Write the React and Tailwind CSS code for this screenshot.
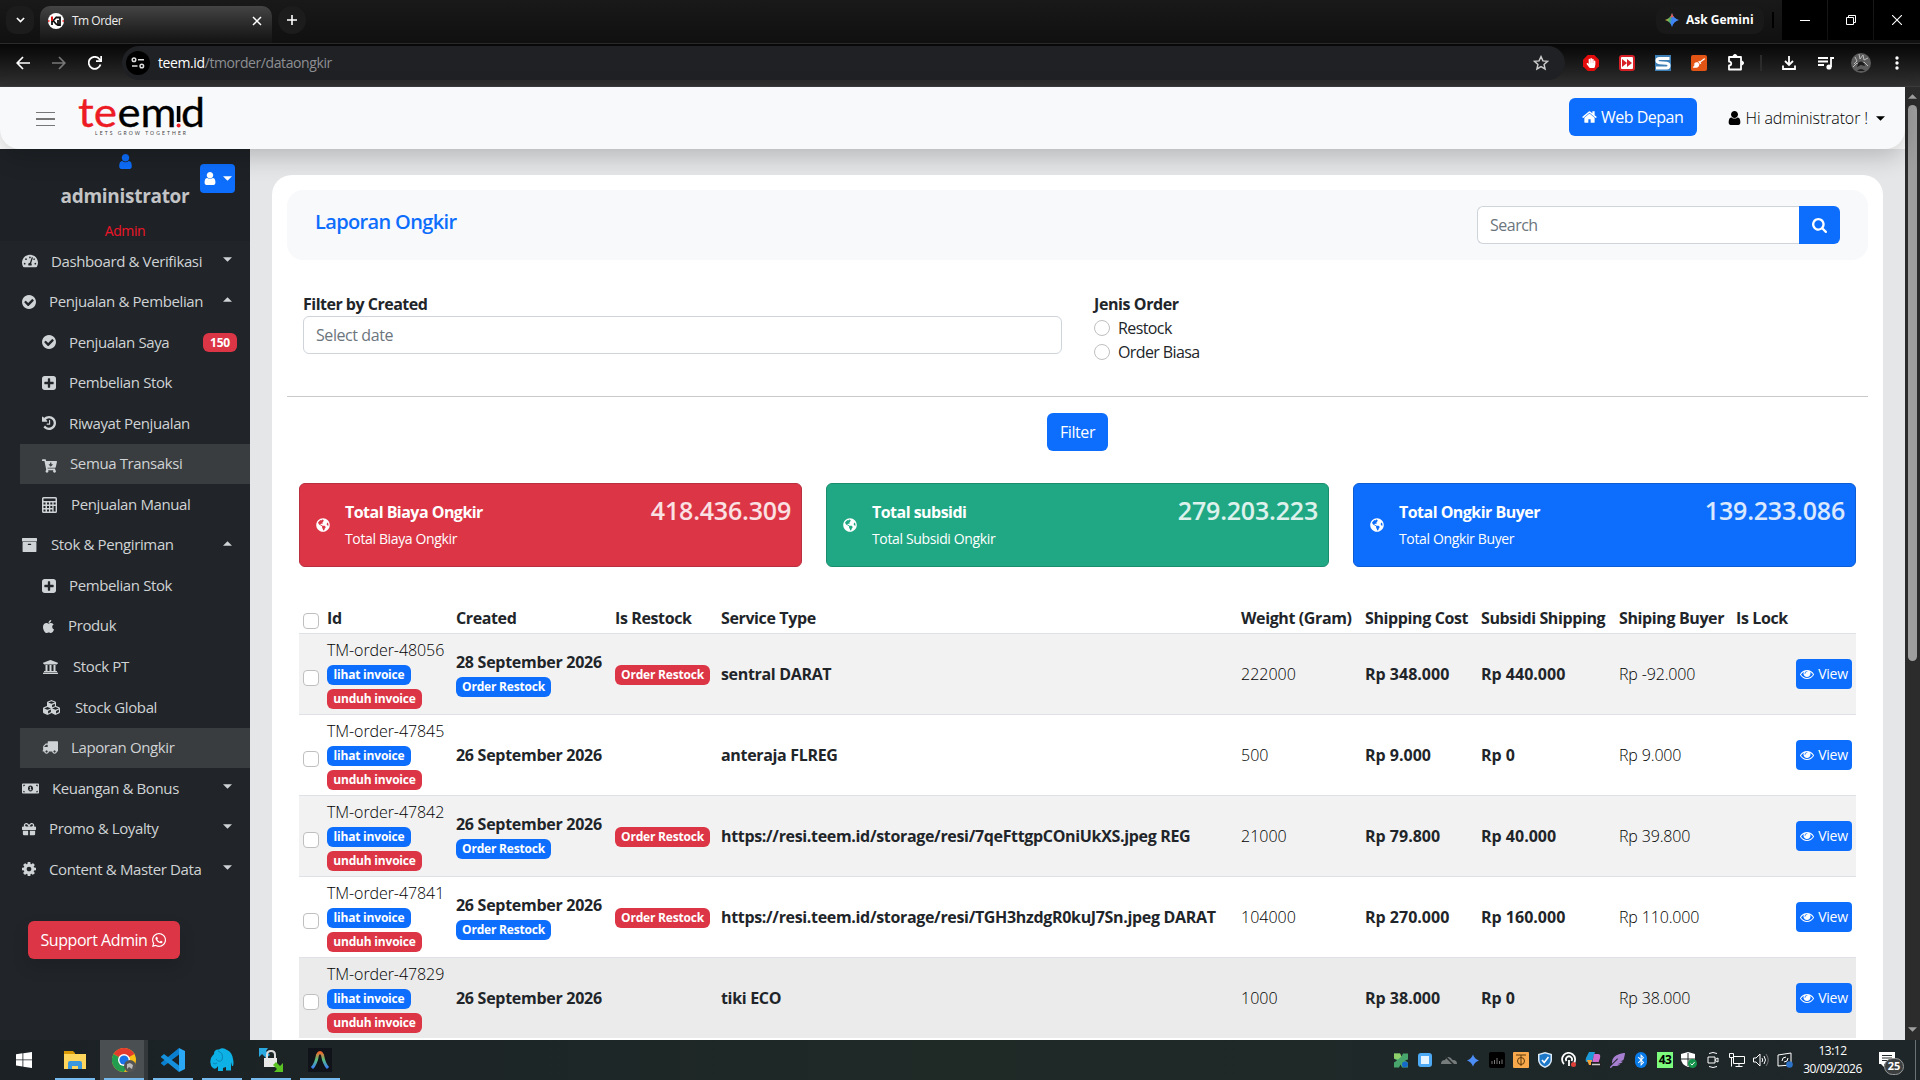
import React from 'react';
import {
  FaTachometerAlt,
  FaCartArrowDown,
  FaApple,
  FaUniversity,
  FaCubes,
  FaMoneyBillAlt,
  FaGift,
  FaWhatsapp,
  FaGlobeAmericas,
  FaBluetoothB,
  FaFeatherAlt,
  FaBroom,
  FaHandPaper,
} from 'react-icons/fa';

// path data on the 1792 unit grid, cropped to the drawn area by viewBox
const GLYPHS = {
  user: ['256 128 1280 1536', 'M1536 1399q0 109-62.5 187t-150.5 78h-854q-88 0-150.5-78t-62.5-187q0-85 8.5-160.5t31.5-152 58.5-131 94-89 134.5-34.5q131 128 313 128t313-128q76 0 134.5 34.5t94 89 58.5 131 31.5 152 8.5 160.5zm-256-887q0 159-112.5 271.5t-271.5 112.5-271.5-112.5-112.5-271.5 112.5-271.5 271.5-112.5 271.5 112.5 112.5 271.5z'],
  home: ['64 224 1664 1344', 'M1472 992v480q0 26-19 45t-45 19h-384v-384h-256v384h-384q-26 0-45-19t-19-45v-480q0-1 .5-3t.5-3l575-474 575 474q1 2 1 6zm223-69l-62 74q-8 9-21 11h-3q-13 0-21-7l-692-577-692 577q-12 8-24 7-13-2-21-11l-62-74q-8-10-7-23.5t11-21.5l719-599q32-26 76-26t76 26l244 204v-195q0-14 9-23t23-9h192q14 0 23 9t9 23v408l219 182q10 8 11 21.5t-7 23.5z'],
  check: ['128 128 1536 1536', 'M1412 734q0-28-18-46l-91-90q-19-19-45-19t-45 19l-408 407-226-226q-19-19-45-19t-45 19l-91 90q-18 18-18 46 0 27 18 45l362 362q19 19 45 19 27 0 46-19l543-543q18-18 18-45zm252 162q0 209-103 385.5t-279.5 279.5-385.5 103-385.5-103-279.5-279.5-103-385.5 103-385.5 279.5-279.5 385.5-103 385.5 103 279.5 279.5 103 385.5z'],
  plus: ['128 128 1536 1536', 'M1408 960v-128q0-26-19-45t-45-19h-320v-320q0-26-19-45t-45-19h-128q-26 0-45 19t-19 45v320h-320q-26 0-45 19t-19 45v128q0 26 19 45t45 19h320v320q0 26 19 45t45 19h128q26 0 45-19t19-45v-320h320q26 0 45-19t19-45zm256-544v960q0 119-84.5 203.5t-203.5 84.5h-960q-119 0-203.5-84.5t-84.5-203.5v-960q0-119 84.5-203.5t203.5-84.5h960q119 0 203.5 84.5t84.5 203.5z'],
  search: ['64 128 1664 1664', 'M1216 832q0-185-131.5-316.5t-316.5-131.5-316.5 131.5-131.5 316.5 131.5 316.5 316.5 131.5 316.5-131.5 131.5-316.5zm512 832q0 52-38 90t-90 38q-54 0-90-38l-343-342q-179 124-399 124-143 0-273.5-55.5t-225-150-150-225-55.5-273.5 55.5-273.5 150-225 225-150 273.5-55.5 273.5 55.5 225 150 150 225 55.5 273.5q0 220-124 399l343 343q37 37 37 90z'],
  eye: ['0 384 1792 1152', 'M1664 960q-152-236-381-353 61 104 61 225 0 185-131.5 316.5t-316.5 131.5-316.5-131.5-131.5-316.5q0-121 61-225-229 117-381 353 133 205 333.5 326.5t434.5 121.5 434.5-121.5 333.5-326.5zm-720-384q0-20-14-34t-34-14q-125 0-214.5 89.5t-89.5 214.5q0 20 14 34t34 14 34-14 14-34q0-86 61-147t147-61q20 0 34-14t14-34zm848 384q0 34-20 69-140 230-376.5 368.5t-499.5 138.5-499.5-139-376.5-368q-20-35-20-69t20-69q140-229 376.5-368t499.5-139 499.5 139 376.5 368q20 35 20 69z'],
  gear: ['128 128 1536 1536', 'M1152 896q0-106-75-181t-181-75-181 75-75 181 75 181 181 75 181-75 75-181zm512-109v222q0 12-8 23t-20 13l-185 28q-19 54-39 91 35 50 107 138 10 12 10 25t-9 23q-27 37-99 108t-94 71q-12 0-26-9l-138-108q-44 23-91 38-16 136-29 186-7 28-36 28h-222q-14 0-24.5-8.5t-11.5-21.5l-28-184q-49-16-90-37l-141 107q-10 9-25 9-14 0-25-11-126-114-165-168-7-10-7-23 0-12 8-23 15-21 51-66.5t54-70.5q-27-50-41-99l-183-27q-13-2-21-12.5t-8-23.5v-222q0-12 8-23t19-13l186-28q14-46 39-92-40-57-107-138-10-12-10-24 0-10 9-23 26-36 98.5-107.5t94.5-71.5q13 0 26 10l138 107q44-23 91-38 16-136 29-186 7-28 36-28h222q14 0 24.5 8.5t11.5 21.5l28 184q49 16 90 37l142-107q9-9 24-9 13 0 25 10 129 119 165 170 7 8 7 22 0 12-8 23-15 21-51 66.5t-54 70.5q26 50 41 98l183 28q13 2 21 12.5t8 23.5z'],
  archive: ['64 128 1664 1536', 'M1088 832q0-26-19-45t-45-19h-256q-26 0-45 19t-19 45 19 45 45 19h256q26 0 45-19t19-45zm576-192v960q0 26-19 45t-45 19h-1408q-26 0-45-19t-19-45v-960q0-26 19-45t45-19h1408q26 0 45 19t19 45zm64-448v256q0 26-19 45t-45 19h-1536q-26 0-45-19t-19-45v-256q0-26 19-45t45-19h1536q26 0 45 19t19 45z'],
  history: ['128 128 1536 1536', 'M1664 896q0 156-61 298t-164 245-245 164-298 61q-172 0-327-72.5t-264-204.5q-7-10-6.5-22.5t8.5-20.5l137-138q10-9 25-9 16 2 23 12 73 95 179 147t225 52q104 0 198.5-40.5t163.5-109.5 109.5-163.5 40.5-198.5-40.5-198.5-109.5-163.5-163.5-109.5-198.5-40.5q-98 0-188 35.5t-160 101.5l137 138q31 30 14 69-17 40-59 40h-448q-26 0-45-19t-19-45v-448q0-42 40-59 39-17 69 14l130 129q107-101 244.5-156.5t284.5-55.5q156 0 298 61t245 164 164 245 61 298zm-640-288v448q0 14-9 23t-23 9h-320q-14 0-23-9t-9-23v-64q0-14 9-23t23-9h224v-352q0-14 9-23t23-9h64q14 0 23 9t9 23z'],
  truck: ['0 256 1792 1408', 'M640 1408q0-52-38-90t-90-38-90 38-38 90 38 90 90 38 90-38 38-90zm-384-512h384v-256h-158q-13 0-22 9l-195 195q-9 9-9 22v30zm1280 512q0-52-38-90t-90-38-90 38-38 90 38 90 90 38 90-38 38-90zm256-1088v1024q0 15-4 26.5t-13.5 18.5-16.5 11.5-23.5 6-22.5 2-25.5 0-22.5-.5q0 106-75 181t-181 75-181-75-75-181h-384q0 106-75 181t-181 75-181-75-75-181h-64q-3 0-22.5.5t-25.5 0-22.5-2-23.5-6-16.5-11.5-13.5-18.5-4-26.5q0-26 19-45t45-19v-320q0-8-.5-35t0-38 2.5-34.5 6.5-37 14-30.5 22.5-30l198-198q19-19 50.5-32t58.5-13h160v-192q0-26 19-45t45-19h1024q26 0 45 19t19 45z'],
};

function Glyph({ name, className }) {
  const [viewBox, d] = GLYPHS[name];
  return (
    <svg viewBox={viewBox} className={className} fill="currentColor">
      <path d={d} />
    </svg>
  );
}

function Calculator({ className }) {
  return (
    <svg viewBox="0 0 15 16" className={className} fill="currentColor">
      <path
        fillRule="evenodd"
        d="M1.5 0h12A1.5 1.5 0 0 1 15 1.5v13a1.5 1.5 0 0 1-1.5 1.5h-12A1.5 1.5 0 0 1 0 14.5v-13A1.5 1.5 0 0 1 1.5 0zM1.5 1.5v2.5h12V1.5zM1.5 5.5v2h2v-2zM5 5.5v2h2v-2zM8.3 5.5v2h2v-2zM11.6 5.5v2h2v-2zM1.5 9v2h2V9zM5 9v2h2V9zM8.3 9v2h2V9zM1.5 12.5v2h2v-2zM5 12.5v2h2v-2zM8.3 12.5v2h2v-2zM11.6 9v5.5h2V9z"
      />
    </svg>
  );
}

const MENU = [
  { label: 'Dashboard & Verifikasi', icon: <FaTachometerAlt className="h-4 w-4" />, box: 'w-[29px]', caret: 'down' },
  { label: 'Penjualan & Pembelian', icon: <Glyph name="check" className="h-[14px] w-[14px]" />, box: 'w-[27px]', caret: 'up' },
  { label: 'Penjualan Saya', icon: <Glyph name="check" className="h-[14px] w-[14px]" />, box: 'w-[27px]', sub: true, badge: '150' },
  { label: 'Pembelian Stok', icon: <Glyph name="plus" className="h-[14px] w-[14px]" />, box: 'w-[27px]', sub: true },
  { label: 'Riwayat Penjualan', icon: <Glyph name="history" className="h-[14px] w-[14px]" />, box: 'w-[27px]', sub: true },
  { label: 'Semua Transaksi', icon: <FaCartArrowDown className="mt-1 h-[14px] w-[15px]" />, box: 'w-[28px]', sub: true, active: true },
  { label: 'Penjualan Manual', icon: <Calculator className="h-4 w-[15px]" />, box: 'w-[29px]', sub: true },
  { label: 'Stok & Pengiriman', icon: <Glyph name="archive" className="h-[14px] w-[15px]" />, box: 'w-[29px]', caret: 'up' },
  { label: 'Pembelian Stok', icon: <Glyph name="plus" className="h-[14px] w-[14px]" />, box: 'w-[27px]', sub: true },
  { label: 'Produk', icon: <FaApple className="-ml-px h-[15px] w-[15px]" />, box: 'w-[26px]', sub: true },
  { label: 'Stock PT', icon: <FaUniversity className="h-4 w-[17px]" />, box: 'w-[31px]', sub: true },
  { label: 'Stock Global', icon: <FaCubes className="h-[17px] w-[19px]" />, box: 'w-[33px]', sub: true },
  { label: 'Laporan Ongkir', icon: <Glyph name="truck" className="h-[13px] w-4" />, box: 'w-[29px]', sub: true, active: true },
  { label: 'Keuangan & Bonus', icon: <FaMoneyBillAlt className="h-[15px] w-[17px]" />, box: 'w-[30px]', caret: 'down' },
  { label: 'Promo & Loyalty', icon: <FaGift className="h-[14px] w-[14px]" />, box: 'w-[27px]', caret: 'down' },
  { label: 'Content & Master Data', icon: <Glyph name="gear" className="h-[14px] w-[14px]" />, box: 'w-[27px]', caret: 'down' },
];

const TOTALS = [
  { title: 'Total Biaya Ongkir', sub: 'Total Biaya Ongkir', value: '418.436.309', color: 'bg-[#dc3545] border-[#b8303f]' },
  { title: 'Total subsidi', sub: 'Total Subsidi Ongkir', value: '279.203.223', color: 'bg-[#20a884] border-[#1b8d6f]' },
  { title: 'Total Ongkir Buyer', sub: 'Total Ongkir Buyer', value: '139.233.086', color: 'bg-[#0d6efd] border-[#0b5cd5]' },
];

const ORDERS = [
  { id: 'TM-order-48056', date: '28 September 2026', restock: true, service: 'sentral DARAT', weight: '222000', cost: 'Rp 348.000', subsidi: 'Rp 440.000', buyer: 'Rp -92.000', bg: 'bg-[#f2f2f2]' },
  { id: 'TM-order-47845', date: '26 September 2026', restock: false, service: 'anteraja FLREG', weight: '500', cost: 'Rp 9.000', subsidi: 'Rp 0', buyer: 'Rp 9.000', bg: 'bg-white' },
  { id: 'TM-order-47842', date: '26 September 2026', restock: true, service: 'https://resi.teem.id/storage/resi/7qeFttgpCOniUkXS.jpeg REG', weight: '21000', cost: 'Rp 79.800', subsidi: 'Rp 40.000', buyer: 'Rp 39.800', bg: 'bg-[#f2f2f2]' },
  { id: 'TM-order-47841', date: '26 September 2026', restock: true, service: 'https://resi.teem.id/storage/resi/TGH3hzdgR0kuJ7Sn.jpeg DARAT', weight: '104000', cost: 'Rp 270.000', subsidi: 'Rp 160.000', buyer: 'Rp 110.000', bg: 'bg-white' },
  { id: 'TM-order-47829', date: '26 September 2026', restock: false, service: 'tiki ECO', weight: '1000', cost: 'Rp 38.000', subsidi: 'Rp 0', buyer: 'Rp 38.000', bg: 'bg-[#ebebeb]' },
];

const GRID = 'grid grid-cols-[24px_129px_159px_106px_520px_124px_116px_138px_117px_60px_64px]';

function Caret({ dir = 'down', className = '' }) {
  return (
    <svg viewBox="0 0 10 5" className={`h-[5px] w-[9px] ${className}`} fill="currentColor">
      <path d={dir === 'down' ? 'M0 0h10L5 5z' : 'M0 5h10L5 0z'} />
    </svg>
  );
}

function Badge({ className, children }) {
  return (
    <span className={`flex h-5 items-center justify-center rounded-md text-xs font-bold tracking-[-0.2px] whitespace-nowrap text-white ${className}`}>
      {children}
    </span>
  );
}

function TabBar() {
  return (
    <div className="flex h-[43px] bg-linear-to-b from-[#191919] to-[#101010] pl-1.5">
      <div className="mt-1.5 flex h-7 w-7 items-center justify-center rounded-[10px] bg-[#1c1c1c]">
        <svg viewBox="0 0 10 6" className="h-[6px] w-[9px]" fill="none" stroke="#fff" strokeWidth="1.8">
          <path d="M1 .8l4 4 4-4" />
        </svg>
      </div>
      <div className="mt-1.5 ml-1.5 flex h-[37px] w-[232px] items-center rounded-t-[10px] bg-linear-to-b from-[#444] to-[#131313] pb-2 pl-2">
        <svg viewBox="0 0 16 16" className="h-4 w-4">
          <circle cx="8" cy="8" r="8" fill="#fff" />
          <path d="M4 4v8M4.5 8.500L8.500 4M5 7.500l4 4.500M8 4.500h4V12h-2V7" fill="none" stroke="#111" strokeWidth="1.8" />
          <path d="M4 3.500V8" stroke="#e11" strokeWidth="1.8" />
          <path d="M0 8h1.500M14.500 8H16" stroke="#e11" strokeWidth="1.5" />
        </svg>
        <span className="ml-2 text-xs tracking-[-0.5px] text-[#eee]">Tm Order</span>
        <svg viewBox="0 0 10 10" className="mr-[10px] ml-auto h-[10px] w-[10px]" stroke="#fff" strokeWidth="1.5">
          <path d="M1 1l8 8M9 1l-8 8" />
        </svg>
      </div>
      <div className="mt-1.5 ml-1.5 flex h-7 w-7 items-center justify-center rounded-full bg-[#1c1c1c]">
        <svg viewBox="0 0 10 10" className="h-[10px] w-[10px]" stroke="#fff" strokeWidth="1.6">
          <path d="M5 0v10M0 5h10" />
        </svg>
      </div>
      <div className="ml-auto flex">
        <div className="mt-1.5 flex h-7 w-[108px] items-center rounded-[10px] bg-[#191919] pl-[9px]">
          <svg viewBox="0 0 14 14" className="h-[14px] w-[14px] shrink-0">
            <defs>
              <linearGradient id="gem" x1="0" y1=".4" x2="1" y2=".6">
                <stop offset="0" stopColor="#f5b52e" />
                <stop offset=".35" stopColor="#4caf6d" />
                <stop offset=".5" stopColor="#3b82f6" />
                <stop offset="1" stopColor="#4f8df8" />
              </linearGradient>
            </defs>
            <path d="M7 0c1 3.600 3.400 6 7 7-3.600 1-6 3.400-7 7-1-3.600-3.400-6-7-7 3.600-1 6-3.400 7-7z" fill="url(#gem)" />
            <path d="M7 0c.8 2.200 1 3 2 4L5 4.500C6 3 6.500 2 7 0z" fill="#e8534a" />
          </svg>
          <span className="ml-[7px] text-xs font-bold whitespace-nowrap text-white">Ask Gemini</span>
        </div>
        <div className="mt-3 mr-2 ml-[8px] h-4 w-[2px] bg-black" />
        <div className="flex h-10 gap-px">
          <div className="flex w-[45px] items-center justify-center bg-black">
            <div className="h-px w-[10px] bg-white" />
          </div>
          <div className="flex w-[45px] items-center justify-center bg-black">
            <svg viewBox="0 0 10 10" className="h-[10px] w-[10px]" fill="none" stroke="#fff">
              <path d="M.5 2.500h7v7h-7zM2.500 2.500v-2h7v7h-2" />
            </svg>
          </div>
          <div className="flex w-[46px] items-center justify-center bg-black">
            <svg viewBox="0 0 10 10" className="h-[10px] w-[10px]" stroke="#fff" strokeWidth="1.1">
              <path d="M0 0l10 10M10 0L0 10" />
            </svg>
          </div>
        </div>
      </div>
    </div>
  );
}

function Toolbar() {
  return (
    <div className="flex h-11 border-t border-b border-t-[#2a2a2a] border-b-[#3c3c3c] bg-linear-to-b from-[#070707] to-[#313131] pt-0.5">
      <div className="flex h-[34px] w-[122px] items-center gap-[22px] pl-4">
        <svg viewBox="0 0 14 14" className="h-[14px] w-[14px]" fill="none" stroke="#fff" strokeWidth="1.7">
          <path d="M14 7H1.500M7 1L1.200 7 7 13" />
        </svg>
        <svg viewBox="0 0 14 14" className="h-[14px] w-[14px]" fill="none" stroke="#777" strokeWidth="1.7">
          <path d="M0 7h12.500M7 1l5.800 6L7 13" />
        </svg>
        <svg viewBox="0 0 14 14" className="h-[14px] w-[14px]" fill="none" stroke="#fff" strokeWidth="1.8">
          <path d="M12.500 8.500A6 6 0 1 1 11.500 3.200l1.500 1.600" />
          <path d="M13.200 0v5.200H8" />
        </svg>
      </div>
      <div className="flex h-[34px] w-[1443px] items-center rounded-full bg-[#202124] pl-1">
        <div className="flex h-6 w-6 items-center justify-center rounded-full bg-black">
          <svg viewBox="0 0 14 12" className="h-3 w-[14px]" fill="none" stroke="#ddd" strokeWidth="1.5">
            <circle cx="3" cy="2.8" r="1.8" />
            <path d="M7 2.800h6M1 9h5.500" />
            <circle cx="10.8" cy="9" r="1.8" />
          </svg>
        </div>
        <span className="ml-2 text-sm tracking-[-0.4px] text-[#8d8f93]">
          <span className="text-white">teem.id</span>/tmorder/dataongkir
        </span>
        <svg viewBox="0 0 24 24" className="mr-4 ml-auto h-4 w-4" fill="none" stroke="#ccc" strokeWidth="2.2">
          <path d="M12 2.500l2.900 6.300 6.900.7-5.200 4.600 1.500 6.800-6.100-3.500-6.100 3.500 1.500-6.800L2.200 9.500l6.900-.7z" />
        </svg>
      </div>
      <div className="flex h-[34px] flex-1 items-center pl-[18px]">
        <div className="flex w-9">
          <div className="relative flex h-4 w-4 items-center justify-center">
            <svg viewBox="0 0 16 16" className="absolute inset-0 h-4 w-4" fill="#e40d0d">
              <path d="M4.700 0h6.600L16 4.700v6.600L11.300 16H4.700L0 11.300V4.700z" />
            </svg>
            <FaHandPaper className="relative h-[10px] w-[10px] text-white" />
          </div>
        </div>
        <div className="flex w-9">
          <div className="flex h-4 w-4 items-center justify-center rounded-[3px] border-2 border-[#d61f26] bg-white">
            <svg viewBox="0 0 10 8" className="h-2 w-[10px]" fill="#d61f26">
              <path d="M0 0l5 4-5 4zM5 0l5 4-5 4z" />
            </svg>
          </div>
        </div>
        <div className="flex w-9">
          <svg viewBox="0 0 16 16" className="h-4 w-4">
            <path d="M0 0h16v16H0z" fill="#3d7fb5" />
            <path d="M14.500 3.500H4.500Q2 3.500 2 5.500t2.500 2.200l7 .6q2.500.3 2.500 2.400t-2.500 2.300H1" fill="none" stroke="#fff" strokeWidth="3" />
          </svg>
        </div>
        <div className="flex w-9">
          <div className="flex h-4 w-4 items-center justify-center rounded-[2px] bg-[#e35514]">
            <FaBroom className="h-3 w-3 text-white" />
          </div>
        </div>
        <svg viewBox="0 0 18 17" className="-mt-px h-[17px] w-[18px]" fill="none" stroke="#fff" strokeWidth="1.8" strokeLinejoin="round">
          <path d="M2 3h12v12.500H2v-4c3 0 3-4 0-4z" />
          <path d="M6 2.500a2 2 0 0 1 4 0M14.500 7a1.800 1.800 0 0 1 0 4" fill="#fff" strokeWidth="1" />
        </svg>
        <div className="mr-5 ml-[15px] h-4 w-[2px] bg-[#2b2b2b]" />
        <svg viewBox="0 0 14 14" className="h-[14px] w-[14px]" fill="none" stroke="#fff" strokeWidth="1.8">
          <path d="M7 0v8.500M3 5l4 4 4-4M1 9.500V13h12V9.500" />
        </svg>
        <svg viewBox="0 0 16 14" className="ml-[22px] h-[14px] w-4" fill="none" stroke="#fff" strokeWidth="1.8">
          <path d="M0 2h10M0 5.500h10M0 9h6M13 11V2h3" />
          <circle cx="11" cy="11" r="1.7" fill="#fff" />
        </svg>
        <svg viewBox="0 0 20 20" className="ml-[17px] h-5 w-5">
          <circle cx="10" cy="10" r="10" fill="#5c5c5c" />
          <path d="M4 4l2 4-3 3M8 1l1 5 3-4 1 5 4-2M2 14l4-4 3 2 4-3 4 4" fill="none" stroke="#bbb" />
          <path d="M7 10q3-3 6 0l1 3-4-1-4 2zM6 18q4-4 8 0z" fill="#1c1c1c" />
        </svg>
        <svg viewBox="0 0 4 14" className="ml-6 h-[14px] w-1" fill="#fff">
          <circle cx="2" cy="2" r="1.7" />
          <circle cx="2" cy="7" r="1.7" />
          <circle cx="2" cy="12" r="1.7" />
        </svg>
      </div>
    </div>
  );
}

function Logo() {
  return (
    <svg viewBox="0 0 128 62" className="ml-[23px] h-[62px] w-32">
      <g fontFamily="Lato" fontSize="40">
        <text x="0" y="40" fill="#ed1c24" stroke="#ed1c24" strokeWidth=".3" textLength="39" lengthAdjust="spacingAndGlyphs">te</text>
        <text x="39.5" y="40" fill="#000" stroke="#000" strokeWidth=".3" textLength="59" lengthAdjust="spacingAndGlyphs">em</text>
        <text x="103" y="40" fill="#000" stroke="#000" strokeWidth=".3" textLength="24" lengthAdjust="spacingAndGlyphs">d</text>
      </g>
      <path d="M100.600 19v16" stroke="#000" strokeWidth="3.6" />
      <circle cx="100.6" cy="38.5" r="2" fill="#ed1c24" />
      <text x="17" y="48" fontFamily="Lato" fontSize="5" fill="#444" textLength="91">LETS GROW TOGETHER</text>
    </svg>
  );
}

function Navbar() {
  return (
    <div className="bg-white">
      <div className="relative z-10 flex h-[62px] items-center rounded-b-[20px] bg-[#f8f9fb] pl-9 shadow-[0_8px_24px_rgba(0,0,0,0.2)]">
        <div className="mt-[2px] flex w-[19px] flex-col gap-[5px]">
          <div className="h-[1.5px] bg-[#777]" />
          <div className="h-[1.5px] bg-[#777]" />
          <div className="h-[1.5px] bg-[#777]" />
        </div>
        <Logo />
        <button className="-mt-0.5 ml-auto flex h-[38px] w-32 items-center justify-center gap-1 rounded-md bg-[#0d6efd] text-base text-white">
          <Glyph name="home" className="h-3 w-[15px]" />
          <span className="tracking-[-0.5px] whitespace-nowrap">Web Depan</span>
        </button>
        <div className="mr-5 ml-[31px] flex items-center text-base font-light text-black">
          <Glyph name="user" className="mr-[5px] h-[14px] w-[13px]" />
          <span className="tracking-[-0.12px] whitespace-nowrap">Hi administrator !</span>
          <Caret className="ml-2" />
        </div>
      </div>
    </div>
  );
}

function Sidebar() {
  return (
    <div className="w-[250px] shrink-0 bg-[#212529] text-[#d0d3d5]">
      <div className="relative flex h-[92px] flex-col items-center bg-[#1e2226]">
        <Glyph name="user" className="mt-[5px] h-[15px] w-[13px] text-[#0d6efd]" />
        <div className="mt-[13px] text-[19px] leading-7 font-bold tracking-[-0.3px] text-[#c3c4c6]">administrator</div>
        <div className="mt-[11px] text-sm leading-5 tracking-[-0.4px] text-[#f01428]">Admin</div>
        <button className="absolute top-[15px] right-[15px] flex h-[29px] w-[35px] items-center justify-center gap-[7px] rounded bg-[#0d6efd] text-white">
          <Glyph name="user" className="h-[13px] w-[12px]" />
          <Caret className="w-[8px]" />
        </button>
      </div>
      {MENU.map((item, i) => (
        <div key={i} className={item.sub ? 'pl-5' : ''}>
          <div className={`flex h-[40.56px] items-center pl-[22px] ${item.active ? 'bg-[#3a3d40]' : ''}`}>
            <div className={`shrink-0 ${item.box}`}>{item.icon}</div>
            <span className="-mt-px text-[15px] tracking-[-0.38px] whitespace-nowrap">{item.label}</span>
            {item.caret && <Caret dir={item.caret} className="mr-[18px] mb-1 ml-auto" />}
            {item.badge && <Badge className="mt-px mr-[13px] ml-auto h-[19px] w-[34px] bg-[#dc3545]">{item.badge}</Badge>}
          </div>
        </div>
      ))}
      <button className="mt-[31px] ml-7 flex h-[38px] w-[152px] items-center justify-center gap-1 rounded-md bg-[#dc3545] text-base whitespace-nowrap text-white shadow-[0_8px_16px_rgba(0,0,0,0.15)]">
        <span className="tracking-[-0.45px]">Support Admin</span>
        <FaWhatsapp className="h-4 w-4" />
      </button>
    </div>
  );
}

function Filters() {
  return (
    <>
      <div className="mt-8 flex px-4">
        <div className="w-[759px]">
          <div className="text-base leading-6 font-bold tracking-[-0.5px]">Filter by Created</div>
          <div className="flex h-[38px] items-center rounded-md border border-[#ced4da] px-3 tracking-[-0.42px] text-[#6c757d]">Select date</div>
        </div>
        <div className="ml-8 leading-6">
          <div className="font-bold tracking-[-0.4px]">Jenis Order</div>
          {['Restock', 'Order Biasa'].map((label) => (
            <div key={label} className="flex h-6 items-center">
              <span className="h-4 w-4 rounded-full border border-[#bfbfbf]" />
              <span className="ml-2 tracking-[-0.6px]">{label}</span>
            </div>
          ))}
        </div>
      </div>
      <div className="mt-8 h-px bg-[#c8c9ca]" />
      <div className="mt-4 flex justify-center">
        <button className="h-[38px] w-[61px] rounded-md bg-[#0d6efd] text-base tracking-[-0.4px] text-white">Filter</button>
      </div>
    </>
  );
}

function Totals() {
  return (
    <div className="mx-3 mt-8 grid grid-cols-3 gap-6">
      {TOTALS.map((t) => (
        <div key={t.value} className={`flex h-[84px] items-start rounded-[6px] border text-white ${t.color}`}>
          <FaGlobeAmericas className="mt-[34px] ml-4 h-[14px] w-[14px]" />
          <div className="mt-[16px] ml-[15px]">
            <div className="text-base leading-6 font-bold tracking-[-0.53px] whitespace-nowrap">{t.title}</div>
            <div className="mt-1 text-sm leading-[21px] tracking-[-0.36px] whitespace-nowrap">{t.sub}</div>
          </div>
          <div className="mt-[8px] mr-[10px] ml-auto text-[25px] leading-9 font-semibold tracking-[-0.2px] text-white/85">{t.value}</div>
        </div>
      ))}
    </div>
  );
}

function Check({ className = '' }) {
  return <span className={`h-4 w-4 rounded-[4px] border border-[#bfbfbf] bg-white ${className}`} />;
}

function OrderTable() {
  return (
    <div className="mx-3 mt-[34px] text-base text-[#212529]">
      <div className={`${GRID} h-8 pb-px leading-[34px] font-bold tracking-[-0.38px] whitespace-nowrap *:pl-1`}>
        <div className="flex items-end pb-1">
          <Check />
        </div>
        {['Id', 'Created', 'Is Restock', 'Service Type', 'Weight (Gram)', 'Shipping Cost', 'Subsidi Shipping', 'Shiping Buyer', 'Is Lock'].map((h) => (
          <div key={h} className="h-8">{h}</div>
        ))}
        <div />
      </div>
      {ORDERS.map((o) => (
        <div key={o.id} className={`${GRID} h-[81px] items-center border-t border-[#dee2e6] whitespace-nowrap *:pl-1 ${o.bg}`}>
          <div className="flex pt-2">
            <Check />
          </div>
          <div className="font-light tracking-[-0.08px]">
            <div className="leading-6 text-black">{o.id}</div>
            <div className="flex h-6 items-center pt-px">
              <Badge className="w-[84px] bg-[#0d6efd]">lihat invoice</Badge>
            </div>
            <div className="flex h-6 items-center pt-px">
              <Badge className="w-[95px] bg-[#dc3545]">unduh invoice</Badge>
            </div>
          </div>
          <div className="font-bold tracking-[-0.28px]">
            <div className="leading-6">{o.date}</div>
            {o.restock && (
              <div className="flex h-6 items-center pt-px">
                <Badge className="w-[95px] bg-[#0d6efd]">Order Restock</Badge>
              </div>
            )}
          </div>
          <div className="pt-px">{o.restock && <Badge className="w-[95px] bg-[#dc3545]">Order Restock</Badge>}</div>
          <div className="font-bold tracking-[-0.33px]">{o.service}</div>
          <div className="font-light text-black">{o.weight}</div>
          <div className="font-bold">{o.cost}</div>
          <div className="font-bold">{o.subsidi}</div>
          <div className="font-light tracking-[-0.15px] text-black">{o.buyer}</div>
          <div />
          <div>
            <button className="flex h-[30px] w-14 items-center justify-center gap-1 rounded bg-[#0d6efd] text-sm text-white">
              <Glyph name="eye" className="h-[9px] w-[14px]" />
              <span className="tracking-[-0.3px]">View</span>
            </button>
          </div>
        </div>
      ))}
    </div>
  );
}

function Scrollbar() {
  return (
    <div className="flex w-[15px] shrink-0 flex-col items-center bg-[#2c2c2c]">
      <Caret dir="up" className="mt-[7px] text-[#a0a0a0]" />
      <div className="mt-1.5 h-[556px] w-[9px] rounded-full bg-[#9f9f9f]" />
      <Caret className="mt-auto mb-2 text-[#a0a0a0]" />
    </div>
  );
}

const APPS = [
  {
    box: 'w-10',
    svg: (
      <svg viewBox="0 0 22 18" className="h-[18px] w-[22px]">
        <path d="M0 0h9l2 2v3H0z" fill="#d99a06" />
        <path d="M0 3h22v15H0z" fill="#ffd55c" />
        <path d="M4 18v-6q0-2 2-2h10q2 0 2 2v6h-4v-3H8v3z" fill="#3a96dd" />
      </svg>
    ),
  },
  {
    box: 'mx-[5px] w-12 border-r-4 border-[#33383b] bg-[#4a4f52] pl-1',
    svg: (
      <svg viewBox="0 0 24 24" className="h-6 w-6">
        <circle cx="12" cy="12" r="12" fill="#fbc116" />
        <path d="M12 12L1.600 6A12 12 0 0 1 22.400 6z" fill="#e33b2e" />
        <path d="M1.600 6A12 12 0 0 0 12 24l5-9-5-3z" fill="#229c4e" />
        <circle cx="12" cy="12" r="6" fill="#fff" />
        <circle cx="12" cy="12" r="4.6" fill="#1a73e8" />
        <circle cx="18" cy="18" r="6" fill="#555" />
        <path d="M15 16l3-1 3 2-1 4-3-2-2 2z" fill="#bbb" />
      </svg>
    ),
  },
  {
    box: 'w-10',
    svg: (
      <svg viewBox="0 0 24 24" className="h-6 w-6">
        <path d="M18 0l6 3v18l-6 3z" fill="#2aa8f5" />
        <path d="M18 0v6.500L3 18 .3 15.800q-.6-.6 0-1.200z" fill="#0a7fcf" />
        <path d="M18 24v-6.500L3 6 .3 8.200q-.6.6 0 1.200z" fill="#1590dc" />
      </svg>
    ),
  },
  {
    box: 'ml-[9px] w-10',
    svg: (
      <svg viewBox="0 0 24 24" className="h-6 w-6" fill="#0db1e6">
        <path d="M4 6Q4 1 9 1.500q4-2.500 8 .5 5 2 6 9 1 4 0 7h-1l-1-4v8.500h-5V19l-3 1v3H8v-5q-2 4-5 2-4-3-2-10 1-2 3-4z" />
        <path d="M8 3q6 2 4 9-3 3-6-1M3 15q2 2 4 0" fill="none" stroke="#0a86b4" />
      </svg>
    ),
  },
  {
    box: 'ml-[9px] w-10',
    svg: (
      <svg viewBox="0 0 24 24" className="h-6 w-6">
        <path d="M0 0h9L7 3l4 4-4 3-4-4-3 3z" fill="#29a9e0" />
        <path d="M8 10V7q0-4 4-4t4 4v3" fill="none" stroke="#ddd" strokeWidth="2" />
        <path d="M5 10h13v9H5z" fill="#e8e8e8" />
        <path d="M24 24h-9l3-3-4-4 3-3 4 4 3-3z" fill="#58c322" />
      </svg>
    ),
  },
  {
    box: 'ml-[9px] w-10',
    svg: (
      <svg viewBox="0 0 24 24" className="h-6 w-6">
        <defs>
          <linearGradient id="arc" x1="0" y1="0" x2="0" y2="1">
            <stop offset="0" stopColor="#f06a2c" />
            <stop offset=".45" stopColor="#5bbf7a" />
            <stop offset="1" stopColor="#3c7df5" />
          </linearGradient>
        </defs>
        <path d="M0 0h24v24H0z" fill="#10141a" />
        <path d="M4 20Q8 16 9.500 7q2.500-5 5 0Q16 16 20 20" fill="none" stroke="url(#arc)" strokeWidth="3" />
      </svg>
    ),
  },
];

function Tray() {
  return (
    <div className="flex *:flex *:h-10 *:w-6 *:items-center *:justify-center">
      <div><svg viewBox="0 0 14 14" className="h-[15px] w-[14px]"><path d="M0 0h6l1.500 3L9 0h5v6l-3 1 3 2v5H8l-1.500-3L5 14H0V9l3-2-3-2z" fill="#48a66c" /><path d="M0 0h6l1.500 3L4 6 0 5z" fill="#8fcf6a" /><circle cx="11" cy="11" r="3" fill="#1669c9" /></svg></div>
      <div><div className="h-[14px] w-[14px] rounded-[3px] border-3 border-[#4ea9f5] bg-[#e6f4ff]" /></div>
      <div><svg viewBox="0 0 16 10" className="h-[10px] w-4"><path d="M0 9q0-4 4-4 2-5 6-2 1 2 2 2 4 0 4 4z" fill="#767b7c" /><path d="M3 0l10 10" stroke="#222a2b" strokeWidth="1.5" /></svg></div>
      <div><svg viewBox="0 0 14 14" className="h-[13px] w-[12px]" fill="#4c8df6"><path d="M7 0c1.200 3.600 3.400 5.800 7 7-3.600 1.200-5.800 3.400-7 7-1.200-3.600-3.400-5.800-7-7 3.600-1.200 5.800-3.400 7-7z" /></svg></div>
      <div><svg viewBox="0 0 16 16" className="h-4 w-4"><rect width="16" height="16" rx="2" fill="#000" /><path d="M3 9v3M5.500 8v4M8 6v6M10.500 9v3M13 7.500v4.500" stroke="#777" /></svg></div>
      <div><svg viewBox="0 0 16 16" className="h-4 w-4"><rect width="16" height="16" rx="1" fill="#f7a94b" /><path d="M3 3h10M8 3v11" stroke="#5c3a0a" /><circle cx="8" cy="9" r="3.5" fill="none" stroke="#5c3a0a" /></svg></div>
      <div><svg viewBox="0 0 14 16" className="h-4 w-[14px]"><path d="M7 0l7 2v6q0 5-7 8-7-3-7-8V2z" fill="#dcecf8" /><path d="M7 1.500l5.500 1.600V8q0 4-5.500 6.500z M7 1.500L1.500 3.100V8q0 4 5.500 6.500z" fill="#1e78c8" /><path d="M4 8l2.200 2.500L10.500 5" fill="none" stroke="#fff" strokeWidth="1.6" /></svg></div>
      <div><svg viewBox="0 0 16 16" className="h-4 w-4" fill="none" stroke="#fff" strokeWidth="1.8"><path d="M3 12a6.500 6.500 0 1 1 10-1M5.500 9a3 3 0 1 1 5 0M8 8v6" /><circle cx="12.5" cy="12.5" r="2.5" fill="#e0403a" stroke="none" /></svg></div>
      <div><svg viewBox="0 0 16 16" className="h-4 w-4"><path d="M4 0h6L7 10H2Q0 10 1 6z" fill="#1d9bd8" /><path d="M9 2h4q3 0 2 4l-2 6H7z" fill="#d16bd0" /><path d="M2 8h5l-1 5H4z" fill="#f2a33a" /><path d="M6 10h10v5H6z" fill="#222" /><path d="M7 12.500h8" stroke="#ccc" strokeWidth="1.5" /></svg></div>
      <div><FaFeatherAlt className="h-[15px] w-[15px] text-[#a77fd0]" /></div>
      <div><div className="flex h-4 w-3 items-center justify-center rounded-[6px] bg-[#0a7cea]"><FaBluetoothB className="h-3 w-3 text-white" /></div></div>
      <div><div className="flex h-4 w-4 items-center justify-center bg-[#7dfb7d] text-xs font-bold tracking-[-0.5px] text-black">43</div></div>
      <div><svg viewBox="0 0 16 16" className="h-4 w-4"><path d="M7 0l7 2v5q0 5-7 8-7-3-7-8V2z" fill="#fff" /><path d="M7 1v13M0 7h14" stroke="#222a2b" /><circle cx="11.5" cy="11.5" r="4.5" fill="#15924b" /><path d="M9.500 11.500l1.500 1.600 2.600-3" fill="none" stroke="#fff" /></svg></div>
      <div><svg viewBox="0 0 14 16" className="h-4 w-[14px]" fill="none" stroke="#fff"><path d="M3 1.500q4-2 8 0M3 14.500q4 2 8 0M2 5h7v6H2zM9 7.500l3-1.500v4L9 8.500" /></svg></div>
      <div><svg viewBox="0 0 16 14" className="h-[14px] w-4" fill="none" stroke="#fff"><path d="M4.500 3.500h11v7h-11zM10 10.500v3M6.500 13.500h7M.5.500h4v4h-4zM2.500 4.500v9" /></svg></div>
      <div><svg viewBox="0 0 16 14" className="h-[14px] w-4" fill="none" stroke="#fff"><path d="M.5 5h2.500l4-4v12l-4-4H.5zM9 5q1.500 2 0 4M11 3q3 4 0 8" /><path d="M13 1q4.500 6 0 12" stroke="#777" /></svg></div>
      <div><svg viewBox="0 0 16 16" className="h-4 w-4" fill="none" stroke="#fff"><path d="M1 3l13-2v12L1 14zM5 9q0-4 4-4M11 6q0 4-4 4" /><circle cx="12.5" cy="12.5" r="3.3" fill="#2c72c7" stroke="none" /></svg></div>
    </div>
  );
}

function Taskbar() {
  return (
    <div className="flex h-10 shrink-0 bg-linear-to-r from-[#1b2125] via-[#1f2a27] to-[#1e2629]">
      <div className="flex w-[55px] items-center pl-4">
        <svg viewBox="0 0 16 16" className="h-4 w-4" fill="#fff">
          <path d="M0 2.200l6.500-.9v6.200H0zM7.300 1.200L16 0v7.500H7.300zM0 8.300h6.500v6.200L0 13.600zM7.300 8.300H16V16l-8.700-1.200z" />
        </svg>
      </div>
      <div className="flex items-stretch">
        {APPS.map((app, i) => (
          <div key={i} className={`flex h-10 flex-col items-center ${app.box}`}>
            <div className="flex h-[38px] items-center pt-0.5">{app.svg}</div>
            <div className="h-0.5 w-full bg-[#76b9ed]" />
          </div>
        ))}
      </div>
      <div className="ml-auto flex">
        <Tray />
        <div className="flex w-[71px] flex-col items-center justify-center text-xs leading-[18px] tracking-[-0.5px] text-white">
          <div>13:12</div>
          <div>30/09/2026</div>
        </div>
        <div className="relative ml-[11px] w-[36px]">
          <svg viewBox="0 0 16 16" className="mt-3 h-4 w-4">
            <path d="M0 0h16v12H5v3l-3-3H0z" fill="#fff" />
            <path d="M3 3.500h10M3 6h10M3 8.500h6" stroke="#222a2b" />
          </svg>
          <div className="absolute top-[18px] left-[5px] flex h-[17px] w-5 items-center justify-center rounded-full border border-[#999] bg-[#3b3f40] text-[11px] font-bold text-white">25</div>
        </div>
        <div className="mr-1 w-px bg-[#6b7072]" />
      </div>
    </div>
  );
}

function App() {
  return (
    <div className="flex h-[1080px] w-[1920px] flex-col overflow-hidden bg-black font-['Open_Sans',sans-serif] text-base text-[#212529]">
      <TabBar />
      <Toolbar />
      <div className="flex min-h-0 flex-1">
        <div className="flex min-w-0 flex-1 flex-col">
          <Navbar />
          <div className="flex min-h-0 flex-1">
            <Sidebar />
            <div className="min-w-0 flex-1 overflow-hidden bg-[#e5e6e8] pt-[26px] pr-[22px] pl-[22px]">
              <div className="relative z-20 h-full rounded-t-[20px] bg-white px-[15px] pt-[15px]">
                <div className="flex h-[70px] rounded-[16px] bg-[#f8f9fb] px-7 pt-4">
                  <div className="pt-1 text-xl leading-6 font-semibold tracking-[-0.65px] text-[#0d6efd]">Laporan Ongkir</div>
                  <div className="ml-auto flex h-[38px]">
                    <div className="flex w-[322px] items-center rounded-l-md border border-r-0 border-[#ced4da] bg-white pl-3 tracking-[-0.5px] text-[#6c757d]">Search</div>
                    <button className="flex w-[41px] items-center justify-center rounded-r-md bg-[#0d6efd] text-white">
                      <Glyph name="search" className="h-[15px] w-[15px]" />
                    </button>
                  </div>
                </div>
                <Filters />
                <Totals />
                <OrderTable />
              </div>
            </div>
          </div>
        </div>
        <Scrollbar />
      </div>
      <Taskbar />
    </div>
  );
}

export default App;
